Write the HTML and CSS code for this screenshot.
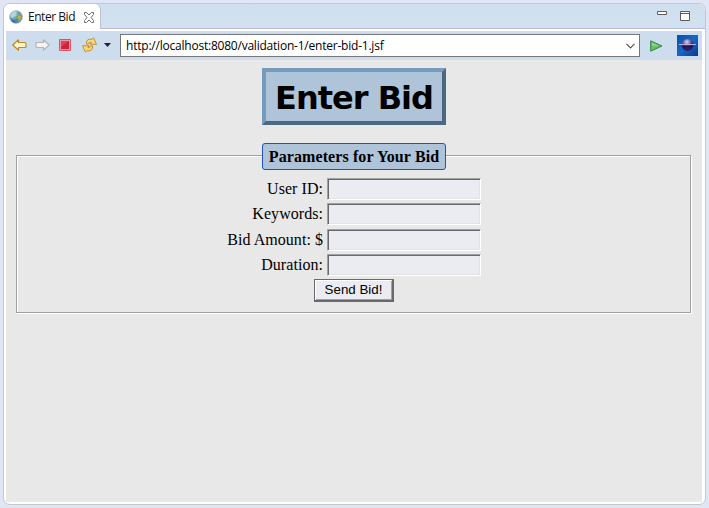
FILE: index.html
```html
<!DOCTYPE html>
<html lang="en">
<head>
<meta charset="utf-8">
<title>Enter Bid</title>
<link rel="stylesheet" href="styles.css">
</head>
<body>
<div class="window">
  <header class="tabs">
    <div class="tab">
      <svg class="globe" width="14" height="14" viewBox="0 0 14 14">
        <defs><radialGradient id="sea" cx=".35" cy=".3"><stop offset="0" stop-color="#b9d9ec"/><stop offset="1" stop-color="#4a86b5"/></radialGradient></defs>
        <circle cx="7" cy="7" r="6.3" fill="url(#sea)" stroke="#8aa3b4" stroke-width=".7"/>
        <path d="M1.2 5.5 3 2.8 5.8 1 8 2 6.5 4 7 5.5 4.5 6 4 8 2 7.5Z" fill="#b8d6d5"/>
        <path d="M9 2.5 12 4 13 7 12 10 9.5 12.5 8.5 9 6 8.5 7 6 9.5 5.5Z" fill="#7fa568"/>
        <path d="M9 6h3l-1 4-2-2Z" fill="#c2ad59"/>
        <path d="M2 9.5 5 10 7 13 4 12Z" fill="#3a6f9d"/>
      </svg>
      <span class="tab-title">Enter Bid</span>
      <svg class="close" width="12" height="11" viewBox="0 0 12 11"><path d="M1.5.5h2L6 3 8.500.5h2v2L8 5.500l2.500 3v2h-2L6 8l-2.500 2.500h-2v-2L4 5.500l-2.500-3Z" fill="#fff" stroke="#6e6e6e"/></svg>
    </div>
    <div class="controls">
      <svg width="10" height="4" viewBox="0 0 10 4"><path d="M.5.5h9v3h-9Z" fill="#fff" stroke="#5c5c5c"/></svg>
      <svg width="10" height="10" viewBox="0 0 10 10"><path d="M.5.5h9v9h-9ZM1 2.500h8" fill="#fff" stroke="#5c5c5c"/></svg>
    </div>
  </header>
  <nav class="toolbar">
    <svg class="back" width="15" height="12" viewBox="0 0 15 12"><path d="M.8 6 6.500.8V3.500H13q1 0 1 1v3q0 1-1 1H6.500v2.700Z" fill="#fff6cf" stroke="#c08a20" stroke-width="1.200" stroke-linejoin="round"/></svg>
    <svg class="forward" width="15" height="12" viewBox="0 0 15 12"><path d="M14.200 6 8.500.8V3.500H2q-1 0-1 1v3q0 1 1 1h6.500v2.700Z" fill="#f4f4f4" stroke="#b4b4b4" stroke-width="1.200" stroke-linejoin="round"/></svg>
    <svg class="stop" width="12" height="12" viewBox="0 0 12 12"><path d="M.5.5h11v11H.5Z" fill="#e99aa3" stroke="#d55768"/><path d="M2 2h8v8H2Z" fill="#d32039"/><path d="M2 2h8L2 8Z" fill="#df4054"/></svg>
    <svg class="refresh" width="16" height="16" viewBox="0 0 16 16"><g fill="#f8d978" stroke="#c08730" stroke-width=".9" stroke-linejoin="round"><path id="turn" d="M4.500 7.200Q3.800 4.500 5.800 2.800 7.800 1.400 10 2.500L11.500.8 14.500 7.300 8 7.200 9.200 5.500Q7.300 4.200 6.500 7Z"/><use href="#turn" transform="rotate(180 7.500 8)"/></g></svg>
    <svg class="more" width="7" height="4" viewBox="0 0 7 4"><path d="M0 0h7L3.500 4Z" fill="#222"/></svg>
    <div class="address"><span class="url">http://localhost:8080/validation-1/enter-bid-1.jsf</span>
      <svg width="9" height="6" viewBox="0 0 9 6"><path d="m.5.8 4 4 4-4" fill="none" stroke="#555" stroke-width="1.200"/></svg>
    </div>
    <svg class="go" width="13" height="12" viewBox="0 0 13 12"><path d="M.7.8v10.400L12 6Z" fill="#6dba6a" stroke="#2e8a4a"/><path d="M2 2.500 9 6H2Z" fill="#92cf88"/></svg>
    <svg class="eclipse" width="21" height="21" viewBox="0 0 21 21">
      <defs><linearGradient id="sky" x1="0" y1="0" x2="1" y2="1"><stop offset="0" stop-color="#0c4fa5"/><stop offset=".5" stop-color="#1768c3"/><stop offset="1" stop-color="#073b8e"/></linearGradient><radialGradient id="moon" cx=".45" cy=".25"><stop offset="0" stop-color="#e0d5f2"/><stop offset=".5" stop-color="#8371b0"/><stop offset="1" stop-color="#2f1c63"/></radialGradient></defs>
      <path d="M0 0h21v21H0Z" fill="url(#sky)"/><circle cx="10.500" cy="10" r="6" fill="url(#moon)"/><path d="M6 11.500h9" stroke="#23114e" stroke-width="2"/><path d="M2 9.500h17" stroke="#b5aee4"/>
    </svg>
  </nav>
  <main class="page">
    <h1 class="banner"><span>Enter Bid</span></h1>
    <form>
      <fieldset class="bid">
        <legend><span class="caption">Parameters for Your Bid</span></legend>
        <div class="rows">
          <label for="user">User ID:</label><input id="user">
          <label for="keys">Keywords:</label><input id="keys">
          <label for="amount">Bid Amount: $</label><input id="amount">
          <label for="duration">Duration:</label><input id="duration">
        </div>
        <button type="button">Send Bid!</button>
      </fieldset>
    </form>
  </main>
</div>
</body>
</html>
```
FILE: styles.css
```css
* { box-sizing: border-box; }
body { margin: 0; height: 508px; padding: 3px; background: #e1e6f6; overflow: hidden; }
svg { display: block; flex: none; }
.window { width: 703px; height: 502px; border: 1px solid #c6c6cc; border-radius: 7px; background: #fff; overflow: hidden; }
.tabs { height: 25px; display: flex; justify-content: space-between; background: linear-gradient(#cfdfee, #d2e1f0); border-bottom: 1px solid #b9bdd9; }
.tab { width: 97px; height: 25px; display: flex; align-items: center; padding: 1px 0 0 5px; background: #fff; border-right: 1px solid #bcc0d3; border-radius: 0 6px 0 0; }
.tab-title { width: 47px; margin: 0 8px 0 5px; font: 12px/16px "Open Sans", sans-serif; letter-spacing: -.46px; white-space: nowrap; color: #111; }
.controls { display: flex; align-items: flex-start; gap: 13px; padding: 7px 15px 0 0; }
.toolbar { height: 29px; margin: 2px 3px 0 2px; display: flex; align-items: center; background: #cddded; padding-left: 6px; }
.back, .forward, .stop, .refresh, .more { position: relative; top: -1px; }
.forward { margin-left: 8px; }
.stop { margin-left: 9px; }
.refresh { margin-left: 11px; }
.more { margin-left: 6px; }
.address { width: 520px; height: 23px; margin-left: 9px; display: flex; flex: none; align-items: center; justify-content: space-between; padding: 0 4px 0 5px; border: 1px solid #777; background: #fff; }
.url { font: 12px/18px "Open Sans", sans-serif; letter-spacing: -.22px; color: #000; white-space: nowrap; }
.go { margin-left: 10px; }
.eclipse { margin-left: 14px; }
.page { height: 442px; margin: 0 3px 0 2px; padding: 8px 10px 0; background: #e8e8e8; font: 16px/18px "Liberation Serif", serif; color: #000; }
.banner { width: 184px; height: 57px; margin: 0 0 0 246px; padding-top: 2px; display: flex; align-items: center; justify-content: center; border: 4px solid; border-color: #759bbd #4e6882 #4e6882 #759bbd; background: #b0c4d9; font: bold 32px/40px "DejaVu Sans", sans-serif; letter-spacing: -1px; white-space: nowrap; }
.bid { width: 675px; min-width: 0; height: 170px; margin: 18px 0 0; padding: 10px 0 0; border: 1px solid #a0a0a0; box-shadow: 1px 1px #fff, inset 1px 1px #fff; }
.bid legend { width: 184px; height: 25px; margin: 0 0 0 245px; padding: 0; }
.caption { width: 184px; height: 27px; display: flex; align-items: center; justify-content: center; border: 1px solid #2055b8; border-radius: 3px; background: #b0c4d9; font-weight: bold; letter-spacing: .1px; white-space: nowrap; }
.rows { display: grid; grid-template-columns: 306px 154px; grid-auto-rows: 22px; gap: 3.33px 4px; align-items: center; }
.rows label { text-align: right; letter-spacing: .05px; }
.rows input { width: 154px; height: 22px; padding: 1px; border: 1px solid; border-color: #a0a0a0 #fff #fff #a0a0a0; box-shadow: inset 1px 1px #696969, inset -1px -1px #e3e3e3; background: #ebecf2; outline: 0; }
.bid button { display: block; width: 80px; height: 23px; margin: 3px 0 0 297px; padding: 1px 0 0; border: 1px solid #696969; border-right-width: 2px; border-bottom-width: 2px; box-shadow: inset 1px 1px #fff, inset -1px -1px #a0a0a0; background: #ebecf2; font: 13.33px/18px "Liberation Sans", sans-serif; color: #000; }
```
